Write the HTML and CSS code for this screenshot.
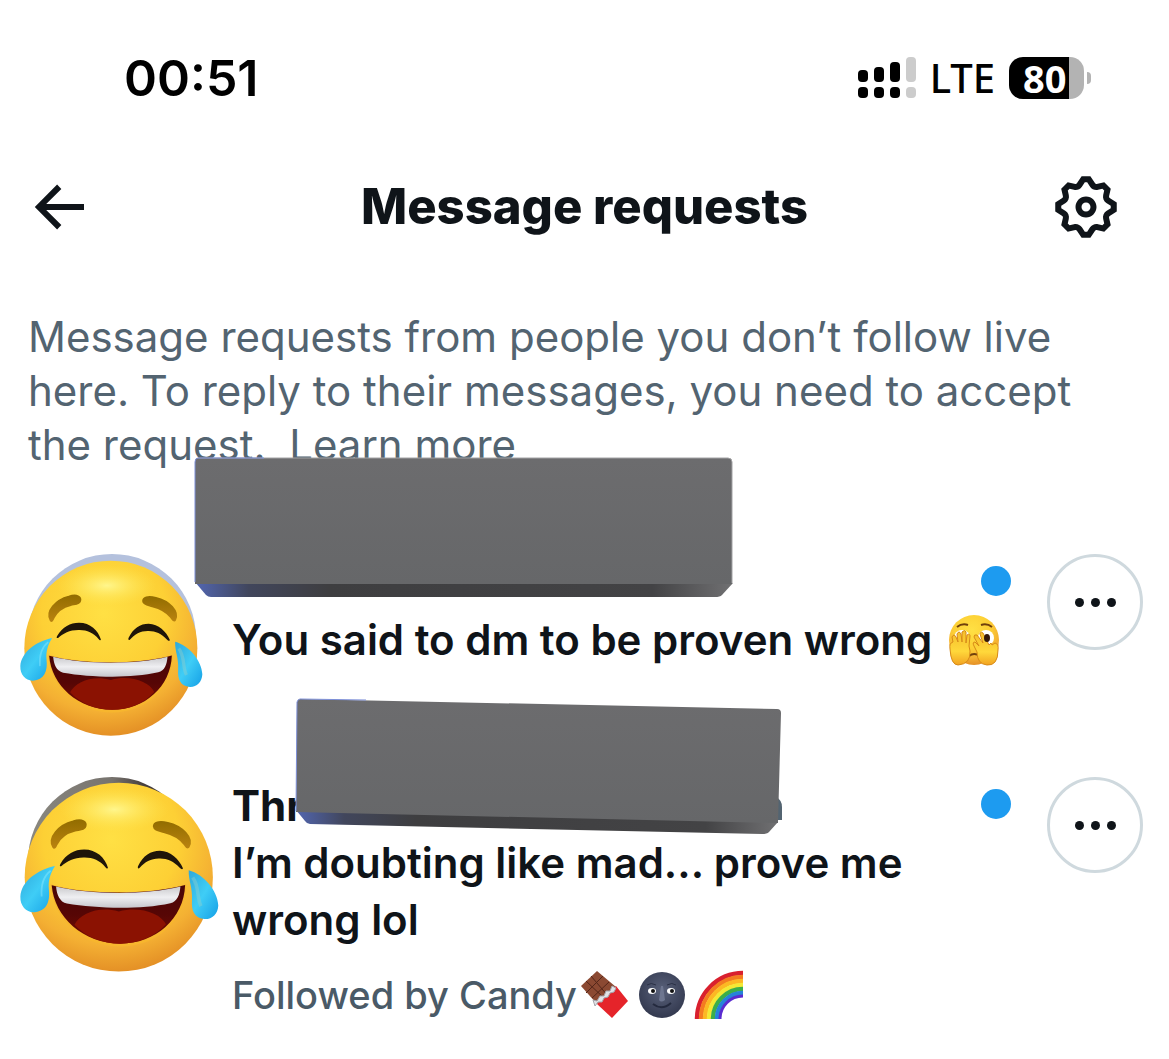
FILE: index.html
```html
<!DOCTYPE html>
<html lang="en">
<head>
<meta charset="utf-8">
<meta name="viewport" content="width=device-width, initial-scale=1">
<title>Message requests</title>
<link rel="stylesheet" href="styles.css">
</head>
<body>
<svg class="defs" width="0" height="0" aria-hidden="true">
  <defs>
    <radialGradient id="face" cx="0.46" cy="0.3" r="0.72">
      <stop offset="0" stop-color="#ffe044"/>
      <stop offset="0.5" stop-color="#fdd035"/>
      <stop offset="0.78" stop-color="#f4b033"/>
      <stop offset="1" stop-color="#e28c24"/>
    </radialGradient>
    <radialGradient id="shine" cx="0.5" cy="0.5" r="0.5">
      <stop offset="0" stop-color="#fff68c"/>
      <stop offset="1" stop-color="#ffe650" stop-opacity="0"/>
    </radialGradient>
    <linearGradient id="brow" x1="0" y1="0" x2="0" y2="1">
      <stop offset="0" stop-color="#936d00"/>
      <stop offset="1" stop-color="#b9820f"/>
    </linearGradient>
    <linearGradient id="mouth" x1="0" y1="0" x2="0" y2="1">
      <stop offset="0" stop-color="#4a0606"/>
      <stop offset="0.5" stop-color="#560605"/>
      <stop offset="1" stop-color="#7a0d02"/>
    </linearGradient>
    <linearGradient id="teeth" x1="0" y1="0" x2="0" y2="1">
      <stop offset="0" stop-color="#c9c9cc"/>
      <stop offset="0.5" stop-color="#efeff2"/>
      <stop offset="1" stop-color="#c6c6cc"/>
    </linearGradient>
    <linearGradient id="tear" x1="0" y1="0" x2="1" y2="1">
      <stop offset="0" stop-color="#2fa8da"/>
      <stop offset="0.5" stop-color="#3fcdf6"/>
      <stop offset="1" stop-color="#149fe6"/>
    </linearGradient>
    <linearGradient id="slab" x1="0" y1="0" x2="0" y2="1">
      <stop offset="0" stop-color="#6c6c6e"/>
      <stop offset="1" stop-color="#666769"/>
    </linearGradient>
    <linearGradient id="edge" x1="0" y1="0" x2="1" y2="0">
      <stop offset="0" stop-color="#5266b0"/>
      <stop offset="0.1" stop-color="#41465c"/>
      <stop offset="0.25" stop-color="#3e3e40"/>
      <stop offset="0.85" stop-color="#434345"/>
      <stop offset="1" stop-color="#707072"/>
    </linearGradient>
    <radialGradient id="moon" cx="0.5" cy="0.4" r="0.6">
      <stop offset="0" stop-color="#59617a"/>
      <stop offset="1" stop-color="#33394f"/>
    </radialGradient>
    <linearGradient id="hand" x1="0" y1="0" x2="0" y2="1">
      <stop offset="0" stop-color="#f5bd2b"/>
      <stop offset="0.6" stop-color="#ffd83b"/>
      <stop offset="1" stop-color="#f2a321"/>
    </linearGradient>
  </defs>
  <symbol id="joy" viewBox="58 58 552 534" preserveAspectRatio="none">
    <ellipse cx="332" cy="324" rx="261" ry="264" fill="url(#face)"/>
    <ellipse cx="320" cy="135" rx="150" ry="62" fill="url(#shine)"/>
    <path d="M150 240C134 213 166 178 205 168C231 160 243 169 240 181C238 192 224 191 211 194C187 200 170 212 160 232C156 242 153 245 150 240Z" fill="url(#brow)" stroke="url(#brow)" stroke-width="5"/>
    <path d="M526 239C540 214 508 181 468 172C443 166 429 171 429 182C430 193 444 194 457 198C481 204 500 214 513 231C519 240 523 244 526 239Z" fill="url(#brow)" stroke="url(#brow)" stroke-width="5"/>
    <path d="M170 287C187 259 209 247 236 247C270 247 294 270 302 298C301 302 298 300 295 296C279 276 258 268 234 269C207 269 189 279 173 293C169 295 167 292 170 287Z" fill="#1f1509"/>
    <path d="M386 292C399 264 421 250 446 250C476 251 499 273 510 299C509 304 505 302 501 298C484 279 465 271 443 272C421 272 404 282 390 298C386 302 383 298 386 292Z" fill="#1f1509"/>
    <path d="M143 344C245 374 415 374 519 344C518 446 438 518 336 518C229 518 151 443 143 344Z" fill="#f7b62e"/>
    <path d="M146 347C247 374 415 374 516 346C513 440 434 510 336 510C234 510 153 437 146 347Z" fill="url(#mouth)"/>
    <path d="M209 457C226 424 279 404 332 420C388 404 448 424 463 456C431 491 386 510 336 510C285 510 240 490 209 457Z" fill="#8b1202"/>
    <path d="M158 350C254 374 410 374 503 350C501 373 495 392 475 397C390 416 270 412 188 398C168 393 160 373 158 350Z" fill="url(#teeth)"/>
    <path d="M155 293C105 304 62 336 59 378C58 405 76 423 97 422C131 420 142 394 138 358C136 333 142 313 155 293Z" fill="url(#tear)"/>
    <path d="M526 305C568 316 606 362 608 403C607 428 590 442 570 441C542 438 533 418 535 389C537 353 525 334 526 305Z" fill="url(#tear)"/>
    <path d="M143 306C122 322 116 350 118 378" fill="none" stroke="#a9f2ff" stroke-width="5" opacity="0.35"/>
    <path d="M537 325C556 350 548 382 560 405" fill="none" stroke="#98cfc8" stroke-width="10" opacity="0.4"/>
  </symbol>
</svg>

<div class="statusbar">
  <time class="clock">00:51</time>
  <div class="indicators">
    <svg class="signal" viewBox="0 0 58 42" aria-label="Signal">
      <rect x="0" y="13" width="10" height="12" rx="4"/><rect x="16" y="10" width="10" height="15" rx="4"/>
      <rect x="32" y="5" width="10" height="20" rx="4"/><rect x="48" y="0" width="10" height="25" rx="4" fill="#ccc"/>
      <rect x="0" y="30" width="10" height="11" rx="4"/><rect x="16" y="30" width="10" height="11" rx="4"/>
      <rect x="32" y="30" width="10" height="11" rx="4"/><rect x="48" y="30" width="10" height="11" rx="4" fill="#ccc"/>
    </svg>
    <span class="network">LTE</span>
    <div class="battery"><span class="battery-level">80</span></div>
  </div>
</div>

<header class="header">
  <button class="icon-button back" aria-label="Back">
    <svg viewBox="0 0 24 24"><path d="M7.4 13l5.05 5.04-1.41 1.42L3.6 12l7.44-7.46 1.41 1.42L7.4 11H20v2z"/></svg>
  </button>
  <h1 class="title">Message requests</h1>
  <button class="icon-button settings" aria-label="Settings">
    <svg viewBox="0 0 24 24"><path d="M10.54 1.75h2.92l1.57 2.36c.11.17.32.25.53.21l2.53-.59 2.17 2.17-.58 2.54c-.05.2.04.41.21.53l2.36 1.57v2.92l-2.36 1.57c-.17.12-.26.33-.21.53l.58 2.54-2.17 2.17-2.53-.59c-.21-.04-.42.04-.53.21l-1.57 2.36h-2.92l-1.58-2.36c-.11-.17-.32-.25-.52-.21l-2.54.59-2.17-2.17.58-2.54c.05-.2-.03-.41-.21-.53l-2.35-1.57v-2.92L4.1 8.97c.18-.12.26-.33.21-.53L3.73 5.9 5.9 3.73l2.54.59c.2.04.41-.04.52-.21l1.58-2.36zm1.07 2l-.98 1.47C10.05 6.08 9 6.5 7.99 6.27l-1.46-.34-.6.6.33 1.46c.24 1.01-.18 2.07-1.05 2.64l-1.46.98v.78l1.46.98c.87.57 1.29 1.63 1.05 2.64l-.33 1.46.6.6 1.46-.34c1.01-.23 2.06.19 2.64 1.05l.98 1.47h.78l.97-1.47c.58-.86 1.63-1.28 2.65-1.05l1.45.34.61-.6-.34-1.46c-.23-1.01.18-2.07 1.05-2.64l1.47-.98v-.78l-1.47-.98c-.87-.57-1.28-1.63-1.05-2.64l.34-1.46-.61-.6-1.45.34c-1.02.23-2.07-.19-2.65-1.05l-.97-1.47h-.78zM12 10.5c-.83 0-1.5.67-1.5 1.5s.67 1.5 1.5 1.5c.82 0 1.5-.67 1.5-1.5s-.68-1.5-1.5-1.5zM8.5 12c0-1.93 1.56-3.5 3.5-3.5 1.93 0 3.5 1.57 3.5 3.5s-1.57 3.5-3.5 3.5c-1.94 0-3.5-1.57-3.5-3.5z"/></svg>
  </button>
</header>

<main class="content">
  <p class="intro">Message requests from people you don’t follow live here. To reply to their messages, you need to accept the request.&nbsp; <a href="#">Learn more</a></p>

  <ul class="requests">
    <li class="request">
      <div class="avatar avatar-blue"><svg class="sticker sticker-small"><use href="#joy"/></svg></div>
      <div class="body">
        <div class="name"></div>
        <p class="message">You said to dm to be proven wrong
          <svg class="emoji" viewBox="0 0 52 52" role="img" aria-label="Face with peeking eye">
            <circle cx="26" cy="26" r="25" fill="url(#face)"/>
            <path d="M9 13q5-4 11-2M33 11q6-2 11 2" fill="none" stroke="#70400c" stroke-width="2"/>
            <ellipse cx="14" cy="24" rx="8" ry="8" fill="#fff"/><ellipse cx="38" cy="24" rx="8" ry="8" fill="#fff"/>
            <path d="M21 42q5-4 11 0" fill="none" stroke="#70400c" stroke-width="2"/>
            <path d="M2 35Q1 29 5 28L4 23q2-4 4 0l2 5-1-8q2-4 4 0l1 8 0-10q3-3 4 0l0 11 1-8q3-2 3 1l-1 10 1 5q1 13-12 14Q3 51 2 35Z" fill="url(#hand)" stroke="#d78a17"/>
            <path d="M50 36Q51 30 47 29L44 31 43 29 41 31 35 19q-3-2-3 1l3 9-6-8q-3-1-3 2l5 9-4-4q-3 0-1 4l3 6q0 12 10 13Q50 52 50 36Z" fill="url(#hand)" stroke="#d78a17"/>
            <ellipse cx="39" cy="24" rx="3" ry="4" fill="#32170a"/>
          </svg></p>
      </div>
      <span class="unread" aria-label="Unread"></span>
      <button class="more" aria-label="More options"><i></i><i></i><i></i></button>
      <svg class="cover cover-first" viewBox="0 0 539 141" aria-hidden="true">
        <path d="M1 125L539 126 528 138Q526 140 521 140H17Q14 140 12 138Z" fill="url(#edge)"/>
        <path d="M4 1H534Q538 1 538 5V127H1V5Q1 1 4 1Z" fill="url(#slab)"/>
        <path d="M4 1H534Q538 1 538 5V126" fill="none" stroke="#a2a2a4"/>
        <path d="M1 125V5Q1 1 4 1H70" fill="none" stroke="#7d8fd8"/>
      </svg>
    </li>

    <li class="request">
      <div class="avatar avatar-stone"><svg class="sticker sticker-large"><use href="#joy"/></svg></div>
      <div class="body">
        <div class="name">Thr</div>
        <p class="message">I’m doubting like mad... prove me wrong lol</p>
        <p class="followed">Followed by Candy<span class="emoji-group"><svg class="emoji-small" viewBox="0 0 48 48" role="img" aria-label="Chocolate bar">
            <path d="M16 0L35 16 16 33 0 15Z" fill="#8b4932"/>
            <path d="M10 5L27 25M5 10L24 28M22 5L5 22M28 11L11 27" stroke="#542619" stroke-width="1"/>
            <path d="M16 33L35 15 47 30 31 47Z" fill="#e5242a"/>
            <path d="M12 29l4 1 3-5 4 0 2-5 4 0 2-5 4 2-2 4-4 1-2 4-4 1-2 4-4 0-3 4Z" fill="#e2e3e7" stroke="#a6a6ad"/>
          </svg><svg class="emoji-small" viewBox="0 0 48 48" role="img" aria-label="New moon face">
            <circle cx="24" cy="24" r="23" fill="url(#moon)"/>
            <ellipse cx="14" cy="20" rx="4" ry="3" fill="#fff"/><ellipse cx="33" cy="20" rx="4" ry="3" fill="#fff"/>
            <circle cx="15" cy="20" r="2" fill="#111"/><circle cx="34" cy="20" r="2" fill="#111"/>
            <path d="M23 15L21 29q2 3 6 0L25 15Z" fill="#6e7690"/>
            <path d="M15 33q9 7 18-1" fill="none" stroke="#242a3e" stroke-width="2"/>
            <path d="M9 14q4-3 9 0M29 14q5-3 9 0" fill="none" stroke="#2b3146" stroke-width="1"/>
          </svg><svg class="emoji-small" viewBox="0 0 48 48" role="img" aria-label="Rainbow">
            <g fill="none" stroke-width="4.4">
              <path d="M2 48A46 46 0 0 1 48 2" stroke="#d9202e"/><path d="M6 48A42 42 0 0 1 48 6" stroke="#f47c20"/>
              <path d="M10 48A38 38 0 0 1 48 10" stroke="#fcb823"/><path d="M14 48A34 34 0 0 1 48 14" stroke="#f4e934"/>
              <path d="M18 48A30 30 0 0 1 48 18" stroke="#3cae49"/><path d="M22 48A26 26 0 0 1 48 22" stroke="#2583d8"/>
              <path d="M25 48A23 23 0 0 1 48 25" stroke="#5a2bd0" stroke-width="3"/>
            </g>
          </svg></span></p>
      </div>
      <span class="unread" aria-label="Unread"></span>
      <button class="more" aria-label="More options"><i></i><i></i><i></i></button>
      <svg class="cover cover-second" viewBox="0 0 486 137" aria-hidden="true">
        <path d="M480 99Q486 102 486 109V122H480Z" fill="#536471"/>
        <path d="M0 112L482 124 473 134Q471 136 466 136L14 126Q11 126 9 123Z" fill="url(#edge)"/>
        <path d="M4 1L481 11Q485 11 485 15L482 125 0 114 1 4Q2 1 4 1Z" fill="url(#slab)"/>
        <path d="M0 113L1 4Q2 1 4 1L70 2" fill="none" stroke="#7d8fd8"/>
      </svg>
    </li>
  </ul>
</main>
</body>
</html>
```
FILE: styles.css
```css
* { box-sizing: border-box; }

body {
  margin: 0;
  background: #fff;
  color: #0f1419;
  font-family: Inter, "Liberation Sans", sans-serif;
}

h1, p, ul { margin: 0; padding: 0; }
button { padding: 0; background: none; border: 0; color: inherit; font: inherit; }
svg { display: block; overflow: visible; }
.defs { position: absolute; }

.statusbar {
  display: flex;
  align-items: center;
  justify-content: space-between;
  padding: 48px 85px 0 124px;
  color: #000;
}
.clock { font-size: 50px; line-height: 60px; font-weight: 600; }
.indicators { display: flex; align-items: center; gap: 14px; }
.signal { width: 58px; height: 42px; }
.network { font-family: "Noto Sans", sans-serif; font-size: 40px; line-height: 60px; font-weight: 500; }
.battery {
  position: relative;
  width: 75px;
  height: 42px;
  border-radius: 14px;
  background: linear-gradient(to right, #000 60px, #b3b3b3 60px);
}
.battery::after {
  content: "";
  position: absolute;
  left: 78px;
  top: 15px;
  width: 4px;
  height: 12px;
  border-radius: 0 4px 4px 0;
  background: #b3b3b3;
}
.battery-level {
  display: block;
  padding-left: 14px;
  color: #fff;
  font-family: "Noto Sans", sans-serif;
  font-size: 38px;
  line-height: 42px;
  font-weight: 700;
}

.header {
  display: grid;
  grid-template-columns: 1fr auto 1fr;
  align-items: center;
  padding-top: 63px;
}
.icon-button { width: 72px; height: 72px; }
.icon-button svg { width: 72px; height: 72px; fill: currentColor; }
.back { margin-left: 24px; }
.settings { justify-self: end; margin-right: 47px; }
.title { font-size: 49px; line-height: 60px; font-weight: 800; }

.content { padding: 67px 26px 32px 28px; }
.intro { color: #536471; font-size: 42px; line-height: 54px; }
.intro a { color: inherit; text-decoration: none; }

.requests { padding-top: 82px; list-style: none; display: grid; gap: 55px; }
.request { position: relative; display: flex; align-items: flex-start; }
.avatar {
  position: relative;
  flex: none;
  width: 168px;
  height: 168px;
  margin-right: 36px;
  border-radius: 50%;
}
.avatar-blue { background: #b4c1dd; }
.avatar-stone { background: linear-gradient(to right, #8a8880, #77736e 50%, #453d3b 70%); }
.sticker { position: absolute; left: -8px; }
.sticker-small { top: 6px; width: 183px; height: 177px; }
.sticker-large { top: 5px; width: 199px; height: 191px; }

.body { flex: 1; min-width: 0; font-size: 42px; line-height: 57px; }
.name { height: 57px; font-weight: 700; }
.message { display: flex; gap: 16px; align-items: center; font-weight: 600; }
.emoji { flex: none; width: 52px; height: 52px; }
.followed {
  display: flex;
  align-items: center;
  gap: 4px;
  padding-top: 20px;
  color: #4a5a67;
  font-size: 38px;
  line-height: 54px;
  font-weight: 500;
}
.emoji-group { display: flex; gap: 9px; }
.emoji-small { width: 48px; height: 48px; }

.unread {
  flex: none;
  width: 30px;
  height: 30px;
  margin: 12px 36px 0 -30px;
  border-radius: 50%;
  background: #1d9bf0;
}
.more {
  flex: none;
  display: flex;
  align-items: center;
  justify-content: center;
  gap: 7px;
  width: 96px;
  height: 96px;
  border: 3px solid #cfd9de;
  border-radius: 50%;
}
.more i { width: 9px; height: 9px; border-radius: 50%; background: #0f1419; }

.cover { position: absolute; }
.cover-first { left: 166px; top: -97px; width: 539px; height: 141px; }
.cover-second { left: 268px; top: -79px; width: 486px; height: 137px; }
```
